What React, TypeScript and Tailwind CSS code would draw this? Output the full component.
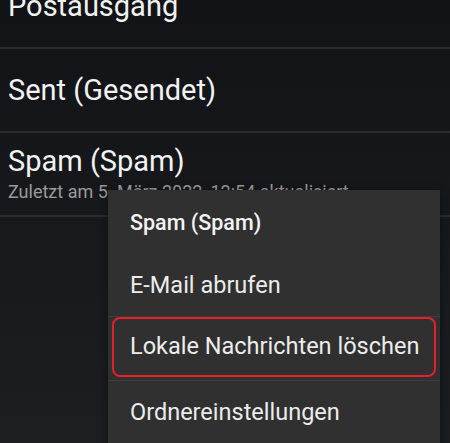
const font = { fontFamily: 'Roboto, "Noto Sans", sans-serif' };

function FolderRow({ title, subtitle }: { title: string; subtitle?: string }) {
  return (
    <div className="flex h-[84px] flex-col justify-center border-b-2 border-[#2a2c30] px-[8px]">
      <div className="text-[29px] leading-[32px] text-[#f2f2f2]">{title}</div>
      {subtitle ? (
        <div className="mt-[4px] text-[18px] leading-[22px] text-[#9a9b9d]">{subtitle}</div>
      ) : null}
    </div>
  );
}

export default function App() {
  return (
    <div
      className="relative h-[443px] w-[450px] overflow-hidden bg-gradient-to-b from-[#111316] to-[#1c1e22]"
      style={font}
    >
      <div className="-mt-[35px]">
        <FolderRow title="Postausgang" />
        <FolderRow title="Sent (Gesendet)" />
        <FolderRow title="Spam (Spam)" subtitle="Zuletzt am 5. März 2022, 12:54 aktualisiert" />
      </div>

      <div className="absolute left-[108px] top-[190px] w-[332px] bg-[#303030] pb-8 shadow-[0_2px_8px_rgba(0,0,0,0.5)]">
        <div className="flex h-[66px] items-center px-[22px] text-[21.5px] font-medium text-[#f4f4f4]">
          Spam (Spam)
        </div>
        <div className="flex h-[61px] items-center border-b border-[#3d3d3d] px-[22px] text-[23.5px] text-[#ececec]">
          E-Mail abrufen
        </div>
        <div className="h-[64px] border-b border-[#3d3d3d] px-[4px] pb-[3px]">
          <div className="flex h-full items-center whitespace-nowrap rounded-[8px] border-2 border-[#e3202c] pl-[16px] text-[23.5px] text-[#ececec]">
            Lokale Nachrichten löschen
          </div>
        </div>
        <div className="flex h-[64px] items-center px-[22px] text-[23.5px] text-[#ececec]">
          Ordnereinstellungen
        </div>
      </div>
    </div>
  );
}
